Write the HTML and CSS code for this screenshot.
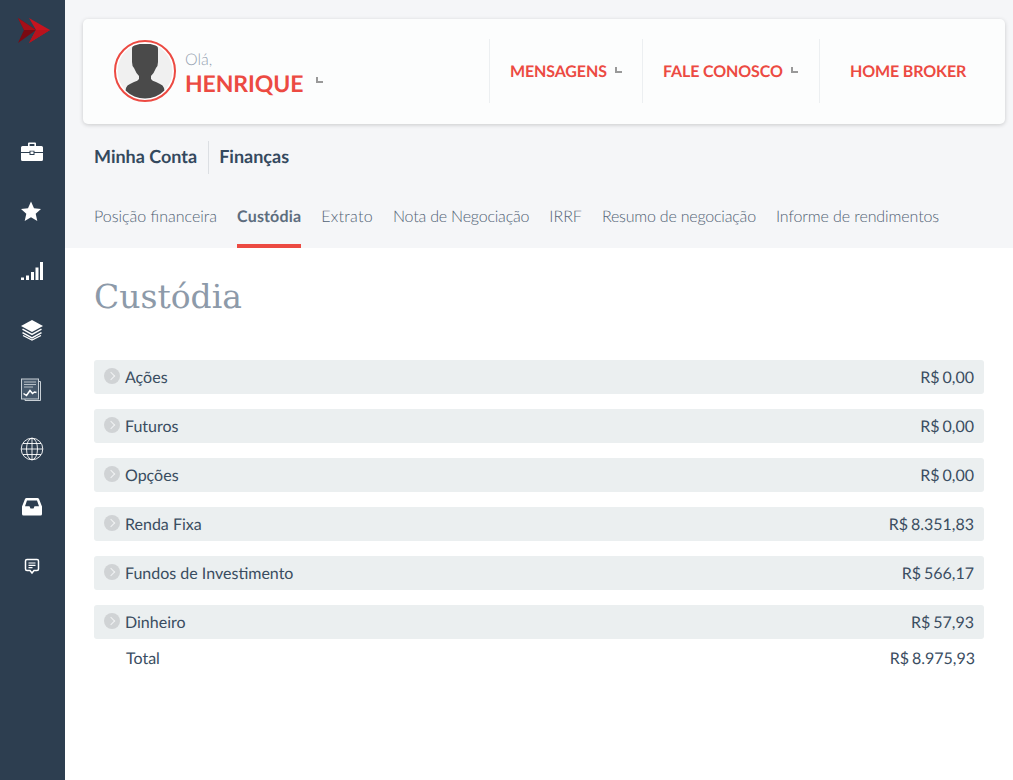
FILE: index.html
```html
<!DOCTYPE html>
<html lang="pt-BR">
<head>
    <meta charset="UTF-8">
    <meta name="viewport" content="width=device-width, initial-scale=1.0">
    <title>Custódia</title>
    <link rel="stylesheet" href="styles.css">
</head>
<body>
    <aside class="sidebar">
        <div class="logo">
            <svg width="34" height="28" viewBox="0 0 34 28">
                <polygon points="1,1 19,13 1,26 7,13" fill="#7a0a12"/>
                <polygon points="1,1 19,13 7,13" fill="#a50f18"/>
                <polygon points="12,1 33,13 12,26 19,13" fill="#c8141f"/>
                <polygon points="19,13 33,13 12,26" fill="#b8121c"/>
            </svg>
        </div>
        <ul class="side_menu">
            <li>
                <svg width="24" height="20" viewBox="0 0 24 20">
                    <path fill="#fff" d="M8 1.500Q8 .5 9 .5h6q1 0 1 1V4h-1.600V2.100H9.600V4H8zM2.500 4h19Q23 4 23 5.500V10H14.500V8.800h-5V10H1V5.500Q1 4 2.500 4zM1 11h8.500v2h5v-2H23v6.500Q23 19 21.500 19h-19Q1 19 1 17.500z"/>
                    <rect x="10.500" y="9.500" width="3" height="2.500" fill="#fff"/>
                </svg>
            </li>
            <li class="side_shift">
                <svg width="22" height="21" viewBox="0 0 22 21">
                    <polygon fill="#fff" points="11,.5 14,7.300 21,7.900 15.700,12.700 17.300,20 11,16.200 4.700,20 6.300,12.700 1,7.900 8,7.300"/>
                </svg>
            </li>
            <li>
                <svg width="24" height="20" viewBox="0 0 24 20">
                    <rect x="1" y="16.500" width="3" height="2.500" fill="#fff"/>
                    <rect x="6" y="14.500" width="3" height="4.500" fill="#fff"/>
                    <rect x="11" y="11" width="3" height="8" fill="#fff"/>
                    <rect x="15.500" y="6.500" width="3" height="12.500" fill="#fff"/>
                    <rect x="20" y="1" width="3" height="18" fill="#fff"/>
                </svg>
            </li>
            <li>
                <svg width="24" height="22" viewBox="0 0 24 22">
                    <polygon fill="#fff" points="12,1 23,7 12,13 1,7"/>
                    <path fill="none" stroke="#fff" stroke-width="1.500" d="M2.500 10.200 12 15.400l9.500-5.200M2.500 13.700 12 18.900l9.500-5.200"/>
                    <path fill="none" stroke="#fff" stroke-width="1.200" d="M3 16.500 12 21l9-4.500"/>
                </svg>
            </li>
            <li class="side_shift">
                <svg width="22" height="24" viewBox="0 0 22 24">
                    <path fill="none" stroke="#c9d0d6" stroke-width="1" d="M19 3.500h1.500v19H5V21"/>
                    <rect x="1.500" y="1" width="17" height="20" fill="#46586b" stroke="#c9d0d6"/>
                    <path fill="none" stroke="#b5bec6" stroke-width="1.200" d="M4 4h12M4 6.500h12M4 9h9"/>
                    <path fill="none" stroke="#fff" stroke-width="1.500" d="M3.500 15.500l3 2 3.500-5 2.500 3 2-1.500 2 .5"/>
                </svg>
            </li>
            <li>
                <svg width="24" height="24" viewBox="0 0 24 24">
                    <g fill="none" stroke="#fff" stroke-width=".9">
                        <circle cx="12" cy="12" r="10.800"/>
                        <ellipse cx="12" cy="12" rx="5.500" ry="10.800"/>
                        <path d="M12 1.200v21.600M1.200 12h21.600M3 6.500h18M3 17.500h18"/>
                    </g>
                </svg>
            </li>
            <li class="side_inbox">
                <svg width="22" height="19" viewBox="0 0 22 19">
                    <path fill="#fff" fill-rule="evenodd" d="M5.500 1h11q1 0 1.500 1L21 9.500V17q0 1.500-1.500 1.500h-17Q1 18.500 1 17V9.500L4 2q.5-1 1.500-1zM6 3.500 4 9.300h4.500l1 2.200h3l1-2.200H18L16 3.500z"/>
                </svg>
            </li>
            <li>
                <svg width="16" height="17" viewBox="0 0 16 17">
                    <path fill="none" stroke="#fff" stroke-width="1.500" d="M3 1.500h10q1.500 0 1.500 1.500v8q0 1.500-1.500 1.500h-3L8 15l-2-2.500H3q-1.500 0-1.500-1.500V3q0-1.500 1.500-1.500z"/>
                    <path fill="none" stroke="#fff" stroke-width="1.200" d="M4.500 5h7M4.500 7.300h7M4.500 9.600h4"/>
                </svg>
            </li>
        </ul>
    </aside>

    <div class="content">
        <div class="top_section">
            <header class="top_card">
                <div class="user_box">
                    <div class="avatar">
                        <svg width="62" height="62" viewBox="0 0 62 62">
                            <defs>
                                <clipPath id="avatar_clip"><circle cx="31" cy="31" r="27.500"/></clipPath>
                            </defs>
                            <circle cx="31" cy="31" r="30" fill="#fff" stroke="#ec4a42" stroke-width="2"/>
                            <circle cx="31" cy="31" r="27.500" fill="#f0f0f0"/>
                            <path clip-path="url(#avatar_clip)" fill="#4a4a4a" d="M18 9q0-5 5-5h16q5 0 5 5v13q0 4-2 6-2 5-5 8v3q1 2 5 3l4 2q3 1 4 4l1 6v5H11v-5l1-6q1-3 4-4l4-2q4-1 5-3v-3q-3-3-5-8-2-2-2-6z"/>
                        </svg>
                    </div>
                    <div class="user_text">
                        <span class="hello">Olá,</span>
                        <span class="user_name">HENRIQUE</span>
                    </div>
                    <i class="corner corner_user"></i>
                </div>
                <nav class="top_nav">
                    <a class="top_link link_msg">MENSAGENS <i class="corner"></i></a>
                    <a class="top_link link_talk">FALE CONOSCO <i class="corner"></i></a>
                    <a class="top_link link_broker">HOME BROKER</a>
                </nav>
            </header>

            <div class="crumbs">
                <span class="crumb">Minha Conta</span>
                <span class="crumb crumb_sep">Finanças</span>
            </div>

            <ul class="tabs">
                <li>Posição financeira</li>
                <li class="active">Custódia</li>
                <li class="tab_wide">Extrato</li>
                <li class="tab_tight">Nota de Negociação</li>
                <li>IRRF</li>
                <li class="tab_tight">Resumo de negociação</li>
                <li class="tab_last">Informe de rendimentos</li>
            </ul>
        </div>

        <main class="page_body">
            <h1 class="page_title">Custódia</h1>
            <div class="rows">
                <div class="row"><span class="row_name"><i class="row_arrow"></i>Ações</span><span class="money">R$ 0,00</span></div>
                <div class="row"><span class="row_name"><i class="row_arrow"></i>Futuros</span><span class="money">R$ 0,00</span></div>
                <div class="row"><span class="row_name"><i class="row_arrow"></i>Opções</span><span class="money">R$ 0,00</span></div>
                <div class="row"><span class="row_name"><i class="row_arrow"></i>Renda Fixa</span><span class="money">R$ 8.351,83</span></div>
                <div class="row"><span class="row_name"><i class="row_arrow"></i>Fundos de Investimento</span><span class="money">R$ 566,17</span></div>
                <div class="row"><span class="row_name"><i class="row_arrow"></i>Dinheiro</span><span class="money">R$ 57,93</span></div>
            </div>
            <div class="total">
                <span>Total</span>
                <span class="money">R$ 8.975,93</span>
            </div>
        </main>
    </div>
</body>
</html>
```

FILE: styles.css
```css
* {
    box-sizing: border-box;
}

body {
    margin: 0;
    display: flex;
    min-height: 100vh;
    font-family: 'Lato', sans-serif;
    color: #3a4d61;
    background-color: #fff;
    overflow: hidden;
    text-rendering: geometricPrecision;
}

.sidebar {
    width: 65px;
    flex-shrink: 0;
    background-color: #2d3e50;
}

.logo {
    height: 122px;
    padding: 17px 0 0 17px;
}

.logo svg,
.side_menu svg {
    display: block;
}

.side_menu {
    list-style: none;
    margin: 0;
    padding: 0;
}

.side_menu li {
    height: 59.5px;
    display: flex;
    align-items: center;
    justify-content: center;
    padding-right: 1px;
}

.side_menu .side_shift {
    padding-right: 3px;
}

.side_inbox {
    margin-top: -2px;
}

.content {
    flex: 1;
    min-width: 0;
}

.top_section {
    height: 248px;
    padding: 19px 8px 0 18px;
    background-color: #f5f6f8;
}

.top_card {
    height: 105px;
    display: flex;
    align-items: center;
    justify-content: space-between;
    background-color: #fcfdfd;
    border-radius: 5px;
    box-shadow: 0 1px 4px rgba(0, 0, 0, 0.18);
}

.user_box {
    display: flex;
    align-items: center;
    padding-left: 31px;
}

.avatar {
    width: 62px;
    height: 62px;
    margin: -2px 9px 0 0;
}

.avatar svg {
    display: block;
}

.user_text {
    display: flex;
    flex-direction: column;
    margin-top: 5px;
}

.hello {
    font-size: 16px;
    font-weight: 300;
    line-height: 19px;
    color: #94a1b0;
}

.user_name {
    font-size: 23px;
    font-weight: 700;
    line-height: 29px;
    letter-spacing: -0.1px;
    color: #ec4a42;
}

.corner {
    display: inline-block;
    width: 7px;
    height: 6px;
    border-left: 2px solid #999;
    border-bottom: 2px solid #999;
}

.corner_user {
    margin: 17px 0 0 13px;
}

.top_nav {
    display: flex;
    height: 64px;
    margin-top: -1px;
}

.top_link {
    display: flex;
    align-items: center;
    gap: 8px;
    font-size: 16px;
    font-weight: 700;
    letter-spacing: -0.12px;
    color: #ec4a42;
    border-left: 1px solid #eceff1;
    white-space: nowrap;
}

.top_link .corner {
    margin-bottom: 2px;
}

.link_msg {
    width: 153px;
    padding-left: 20px;
}

.link_talk {
    width: 177px;
    padding-left: 20px;
}

.link_broker {
    width: 186px;
    padding-left: 30px;
}

.crumbs {
    display: flex;
    height: 33px;
    margin: 17px 0 0 11px;
}

.crumb {
    height: 33px;
    font-size: 18px;
    font-weight: 700;
    line-height: 31px;
    color: #34495e;
}

.crumb_sep {
    margin-left: 11px;
    padding-left: 10px;
    border-left: 1px solid #dcdfe3;
}

.tabs {
    list-style: none;
    display: flex;
    gap: 20px;
    margin: 24px 0 0 11px;
    padding: 0;
}

.tabs li {
    height: 50px;
    padding-top: 9px;
    font-size: 16px;
    font-weight: 300;
    line-height: 20px;
    color: #526375;
    white-space: nowrap;
}

.tabs .active {
    font-weight: 700;
    letter-spacing: 0.15px;
    color: #5d6d7e;
    border-bottom: 4px solid #ec4a42;
}

.tabs .tab_wide {
    letter-spacing: 0.28px;
}

.tabs .tab_tight {
    letter-spacing: -0.2px;
}

.tabs .tab_last {
    letter-spacing: -0.1px;
}

.page_body {
    padding: 0 29px 0 29px;
}

.page_title {
    margin: 0;
    padding-top: 26px;
    height: 112px;
    font-family: 'DejaVu Serif', serif;
    font-size: 33px;
    font-weight: 400;
    line-height: 45px;
    color: #8d9aa9;
}

.rows {
    display: flex;
    flex-direction: column;
    gap: 15px;
}

.row {
    display: flex;
    align-items: center;
    justify-content: space-between;
    height: 34px;
    padding: 0 10px;
    background-color: #ebeff0;
    border-radius: 3px;
    font-size: 16px;
}

.row_name {
    display: flex;
    align-items: center;
}

.money {
    word-spacing: -1.2px;
}

.row_arrow {
    position: relative;
    width: 16px;
    height: 16px;
    margin: 0 5px 2px 0;
    border-radius: 50%;
    background-color: #d0d3d5;
}

.row_arrow::after {
    content: "";
    position: absolute;
    top: 5px;
    left: 4px;
    width: 5px;
    height: 5px;
    border-top: 1.5px solid #f0f2f3;
    border-right: 1.5px solid #f0f2f3;
    transform: rotate(45deg);
}

.total {
    display: flex;
    justify-content: space-between;
    align-items: center;
    height: 38px;
    padding: 0 9px 0 32px;
    font-size: 16px;
}
```
